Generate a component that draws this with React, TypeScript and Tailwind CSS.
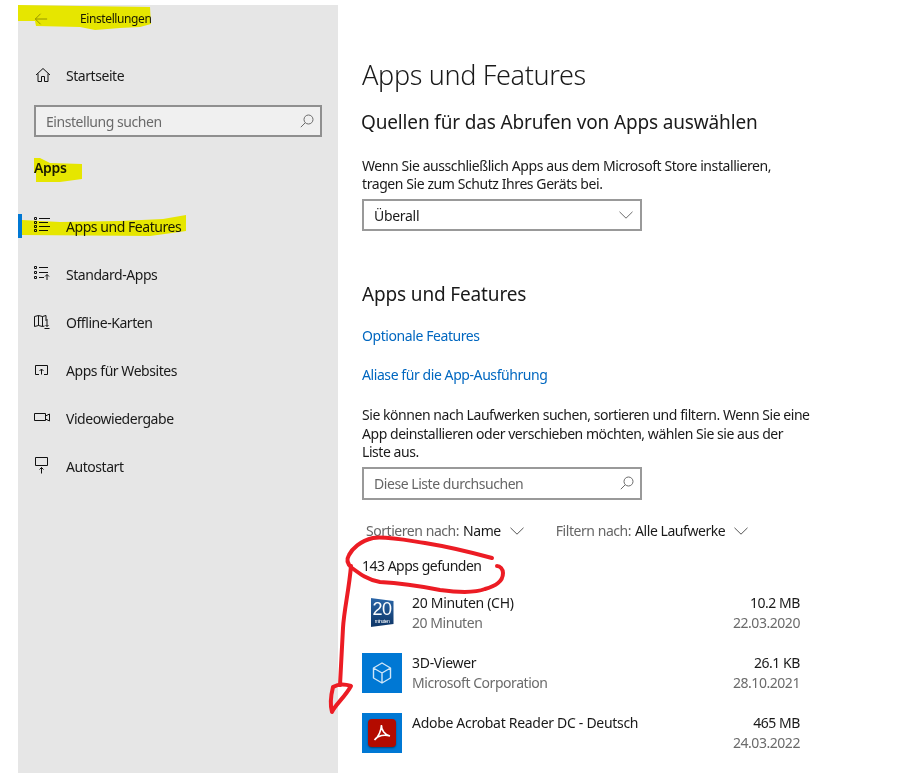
import { ReactNode } from "react";

const font = "font-['Noto_Sans','Open_Sans',sans-serif]";

function Icon({ children, className = "" }: { children: ReactNode; className?: string }) {
    return (
        <svg viewBox="0 0 16 16" fill="none" stroke="#111" strokeWidth="1" className={"h-4 w-4 shrink-0 overflow-visible " + className}>
            {children}
        </svg>
    );
}

function SearchGlyph() {
    return (
        <svg viewBox="0 0 14 14" fill="none" stroke="#6b6b6b" strokeWidth="1" className="h-[14px] w-[14px]">
            <circle cx="8.5" cy="5.5" r="4.5" />
            <path d="M5.2 8.8 0.8 13.2" />
        </svg>
    );
}

function Chevron({ color = "#555" }: { color?: string }) {
    return (
        <svg viewBox="0 0 14 8" fill="none" stroke={color} strokeWidth="1" className="h-2 w-[14px]">
            <path d="M0.5 0.8 7 7.2 13.5 0.8" />
        </svg>
    );
}

const nav: { label: string; icon: ReactNode; active?: boolean }[] = [
    {
        label: "Apps und Features",
        active: true,
        icon: (
            <Icon>
                <path d="M.5-.5h2v2h-2zM.5 3.500h2v2h-2zM.5 7.500h2v2h-2zM.5 11.500h2v2h-2z" />
                <path d="M5 .5h11M5 4.500h9M5 8.500h11M5 12.500h9" />
            </Icon>
        ),
    },
    {
        label: "Standard-Apps",
        icon: (
            <Icon>
                <path d="M.5.5h2v2h-2zM.5 5.500h2v2h-2zM.5 10.500h2v2h-2z" />
                <path d="M5 1.500h9M5 6.500h9M5 11.500h5M13 14V8.500M11 10.500l2-2 2 2" />
            </Icon>
        ),
    },
    {
        label: "Offline-Karten",
        icon: (
            <Icon>
                <path d="M.5 2.500 4.500 1.500 8.500 2.500 12 1.500V7M.5 2.500v10l4-1 4 1 2-.5M4.500 1.500v10M8.500 2.500v10" />
                <path d="M13 5v7.500M11.500 11l1.500 1.500 1.500-1.500M10.500 14.500H15.500" />
            </Icon>
        ),
    },
    {
        label: "Apps für Websites",
        icon: (
            <Icon>
                <path d="M5 12.500H1.500v-9h12v9H10M7.500 12.500V7M5.500 9l2-2 2 2" />
            </Icon>
        ),
    },
    {
        label: "Videowiedergabe",
        icon: (
            <Icon>
                <path d="M.5 3.500h11v7h-11zM11.500 6 15.500 4V11L11.500 9" />
            </Icon>
        ),
    },
    {
        label: "Autostart",
        icon: (
            <Icon>
                <path d="M1.500-.5h12v8h-12zM7.500 15.500V9.500M5.500 11.500l2-2 2 2" />
            </Icon>
        ),
    },
];

const apps: { name: string; publisher?: string; size: string; date: string; icon: ReactNode }[] = [
    {
        name: "20 Minuten (CH)",
        publisher: "20 Minuten",
        size: "10.2 MB",
        date: "22.03.2020",
        icon: (
            <div className="flex h-[29px] w-[23px] flex-col items-center justify-center bg-gradient-to-b from-[#2a66a8] to-[#0e3566] font-['Liberation_Sans',sans-serif] text-white [clip-path:polygon(0_0,100%_10%,100%_90%,0_100%)]">
                <span className="text-[18px] leading-[17px]">20</span>
                <span className="text-[5px] leading-[6px]">minuten</span>
            </div>
        ),
    },
    {
        name: "3D-Viewer",
        publisher: "Microsoft Corporation",
        size: "26.1 KB",
        date: "28.10.2021",
        icon: (
            <div className="flex h-10 w-10 items-center justify-center bg-[#0078d4]">
                <svg viewBox="0 0 24 24" fill="none" stroke="#cfe6f8" strokeWidth="1.4" className="h-[24px] w-[24px]">
                    <path d="M12 2 20.500 7v10L12 22l-8.500-5V7zM3.500 7 12 12l8.500-5M12 12v10" strokeLinejoin="round" />
                </svg>
            </div>
        ),
    },
    {
        name: "Adobe Acrobat Reader DC - Deutsch",
        size: "465 MB",
        date: "24.03.2022",
        icon: (
            <div className="flex h-10 w-10 items-center justify-center bg-[#0078d4]">
                <div className="h-7 w-7 rounded-[4px] bg-[#b30b00] shadow-[0_1px_2px_rgba(0,0,0,0.45)]">
                    <svg viewBox="0 0 28 28" fill="none" stroke="#fff" strokeWidth="1.6" strokeLinejoin="round" className="h-7 w-7">
                        <path d="M13.500 6C13 12 10 18 6.500 21M13.500 6C13 11 17 16 22 17M6.500 21C10 16 17 15.500 22 17" />
                    </svg>
                </div>
            </div>
        ),
    },
];

export default function App() {
    return (
        <div className={"relative h-[773px] w-[906px] overflow-hidden bg-white text-[14px] text-[#1a1a1a] " + font}>
            <div className="flex h-full pl-[18px] pt-[5px]">
                <aside className="flex h-full w-[320px] shrink-0 flex-col bg-[#e6e6e6]">
                    <div className="flex h-[28px] items-center pl-[16px]">
                        <svg viewBox="0 0 16 16" fill="none" stroke="#8a8a8a" strokeWidth="1" className="h-[14px] w-[14px]">
                            <path d="M15 8H1.500M7.500 2 1.500 8l6 6" />
                        </svg>
                        <span className="ml-[32px] text-[12px] tracking-[-0.4px]">Einstellungen</span>
                    </div>
                    <div className="mt-[18px] flex h-[48px] items-center pl-[17px]">
                        <Icon>
                            <path d="M1 8 8 1.500 15 8M3 6.500V14.500H6.500V9.500H9.500V14.500H13V6.500" />
                        </Icon>
                        <span className="ml-[15px] tracking-[-0.45px]">Startseite</span>
                    </div>
                    <div className="mx-[16px] mt-[6px] flex h-[32px] items-center justify-between border-2 border-[#8f8f8f] bg-[#f0f0f0] pl-[10px] pr-[6px] text-[#6a6a6a]">
                        <span className="tracking-[-0.45px]">Einstellung suchen</span>
                        <SearchGlyph />
                    </div>
                    <div className="mt-[21px] pl-[16px] font-semibold leading-[20px] tracking-[-0.3px]">Apps</div>
                    <nav className="mt-[24px] flex flex-col">
                        {nav.map((item) => (
                            <div key={item.label} className="relative flex h-[48px] items-center pl-[16px]">
                                {item.active && <div className="absolute left-0 top-[12px] h-[24px] w-[4px] bg-[#0078d4]" />}
                                {item.icon}
                                <span className="ml-[16px] tracking-[-0.45px]">{item.label}</span>
                            </div>
                        ))}
                    </nav>
                </aside>

                <main className="flex-1 pl-[24px]">
                    <h1 className="mt-[52px] text-[27px] leading-[36px] font-light tracking-[-0.35px]">Apps und Features</h1>
                    <h2 className="-ml-px mt-[16px] text-[19px] leading-[26px] tracking-[-0.15px]">Quellen für das Abrufen von Apps auswählen</h2>
                    <p className="mt-[22px] w-[440px] leading-[18px] tracking-[-0.42px]">
                        Wenn Sie ausschließlich Apps aus dem Microsoft Store installieren, tragen Sie zum Schutz Ihres Geräts bei.
                    </p>
                    <div className="mt-[6px] flex h-[32px] w-[280px] items-center justify-between border-2 border-[#999] pl-[10px] pr-[7px]">
                        <span className="tracking-[-0.3px]">Überall</span>
                        <Chevron color="#6b6b6b" />
                    </div>
                    <h2 className="mt-[50px] text-[19px] leading-[26px] tracking-[-0.15px]">Apps und Features</h2>
                    <div className="mt-[19px] leading-[20px] tracking-[-0.42px] text-[#0067c0]">Optionale Features</div>
                    <div className="mt-[19px] leading-[20px] tracking-[-0.42px] text-[#0067c0]">Aliase für die App-Ausführung</div>
                    <p className="mt-[21px] w-[450px] leading-[18.500px] tracking-[-0.45px]">
                        Sie können nach Laufwerken suchen, sortieren und filtern. Wenn Sie eine App deinstallieren oder verschieben möchten, wählen Sie sie aus der Liste aus.
                    </p>
                    <div className="mt-[5px] flex h-[33px] w-[280px] items-center justify-between border-2 border-[#999] pl-[10px] pr-[6px] text-[#666]">
                        <span className="tracking-[-0.45px]">Diese Liste durchsuchen</span>
                        <SearchGlyph />
                    </div>
                    <div className="mt-[21px] flex h-[20px] items-center pl-[4px] tracking-[-0.45px]">
                        <span className="text-[#666]">Sortieren nach:</span>
                        <span className="ml-[4px]">Name</span>
                        <span className="ml-[9px]"><Chevron /></span>
                        <span className="ml-[32px] text-[#666]">Filtern nach:</span>
                        <span className="ml-[4px]">Alle Laufwerke</span>
                        <span className="ml-[9px]"><Chevron /></span>
                    </div>
                    <div className="mt-[15px] leading-[20px] tracking-[-0.5px]">143 Apps gefunden</div>
                    <div className="mt-[17px] flex w-[438px] flex-col gap-[20px]">
                        {apps.map((app) => (
                            <div key={app.name} className="flex h-[40px] tracking-[-0.45px]">
                                <div className="flex w-[40px] shrink-0 items-center justify-center">{app.icon}</div>
                                <div className="ml-[10px] flex-1">
                                    <div className="leading-[20px] tracking-[-0.3px]">{app.name}</div>
                                    <div className="leading-[20px] text-[#6b6b6b]">{app.publisher}</div>
                                </div>
                                <div className="text-right">
                                    <div className="leading-[20px]">{app.size}</div>
                                    <div className="leading-[20px] text-[#6b6b6b]">{app.date}</div>
                                </div>
                            </div>
                        ))}
                    </div>
                </main>
            </div>

            {/* marker annotations drawn over the screenshot */}
            <svg viewBox="0 0 906 773" className="pointer-events-none absolute inset-0 h-full w-full mix-blend-multiply">
                <g fill="#ffff00">
                    <path d="M18 5 80 6 150 7 151 24 140 27 120 28 95 30 80 27 36 26 35 21 18 21Z" />
                    <path d="M34 158 40 158 50 163 82 164 82 179 60 182 36 182 36 173 34 173Z" />
                    <path d="M22 220 60 222 120 221 163 219 186 215 186 231 172 233 150 236 22 235Z" />
                </g>
            </svg>
            <svg viewBox="0 0 906 773" fill="none" stroke="#ec1c24" strokeWidth="4" strokeLinecap="round" strokeLinejoin="round" className="pointer-events-none absolute inset-0 h-full w-full">
                <path d="M492 558C470 552 450 547 425 543 405 540 385 536 373 538 360 541 352 549 349 555 346 560 347 564 352 568 360 574 368 580 380 582 400 583 420 586 440 590 455 592 475 593 485 589 495 586 503 582 503 573 503 569 500 566 497 566" />
                <path d="M351 566C349 590 344 610 343 628 342 645 341 665 340 685" />
                <path d="M351 686C345 684 338 684 333 687 331 695 330 705 332 712 335 705 345 697 351 686Z" />
            </svg>
        </div>
    );
}
